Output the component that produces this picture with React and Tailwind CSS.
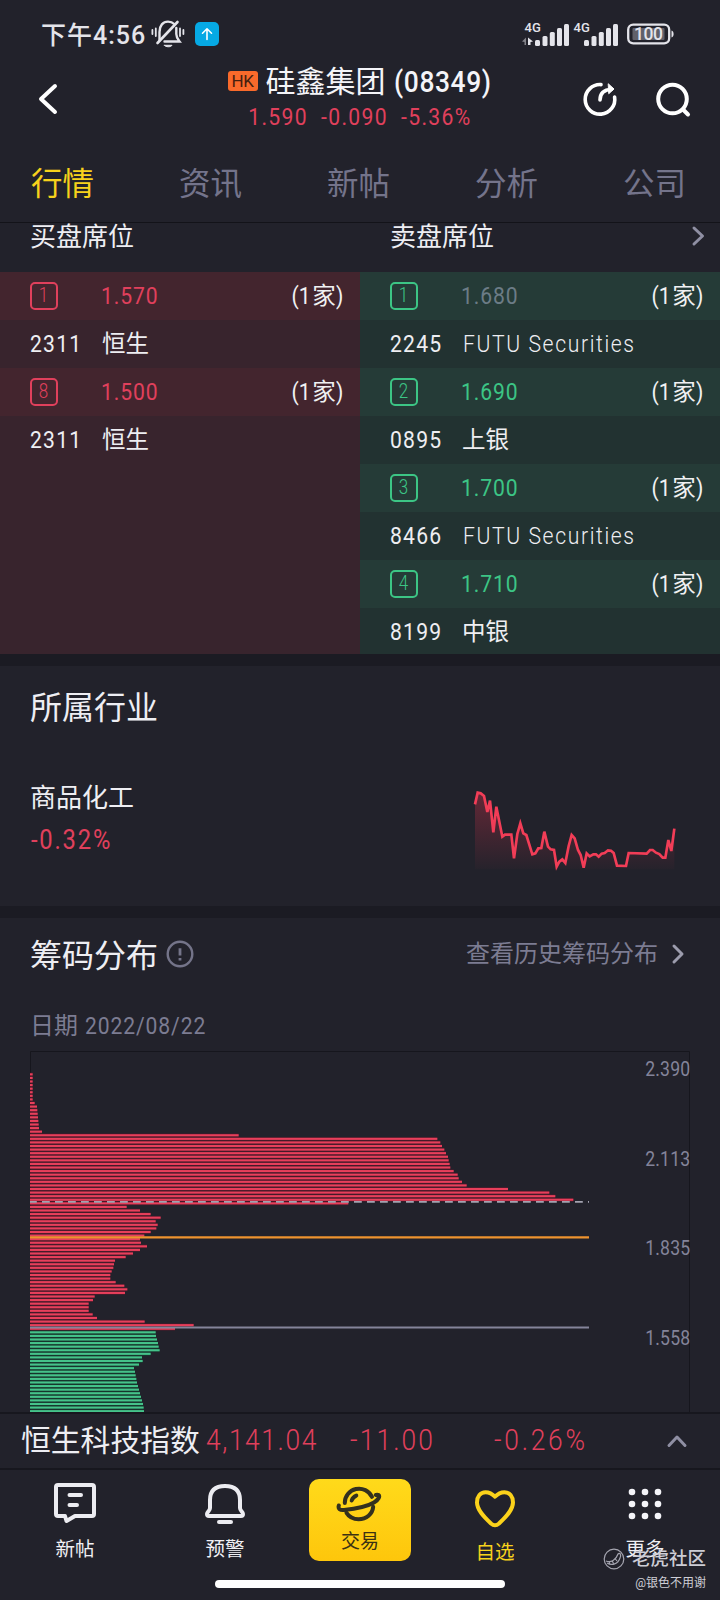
const RED = 'text-[#e0405c]';
const NARROW = 'inline-block whitespace-nowrap scale-x-[0.88] ';

const BAR_ENDS = [
  98, 98, 98, 98, 98, 98, 98, 98, 104, 111, 112, 113, 114, 115, 116, 117, 126, 716,
  1312, 1321, 1326, 1333, 1338, 1344, 1346, 1349, 1351, 1361, 1373, 1376, 1386, 1400, 1524, 1648, 1666, 1720, 1045,
  380, 420, 452, 482, 467, 473, 469, 452, 433, 420, 423, 441, 420, 399, 377, 345, 342, 340, 335, 331, 331, 347, 373, 382, 375,
  284, 279, 266, 266, 266, 278, 291, 434, 581, 525,
  467, 468, 471, 474, 476, 479, 452, 426, 428, 417, 402, 405, 407, 409, 411, 414, 417, 420, 423, 426, 429, 431, 432,
];
const FIRST_GREEN = 72;

const AXIS = [
  ['2.390', 1076],
  ['2.113', 1166],
  ['1.835', 1255],
  ['1.558', 1345],
];

function StatusBar() {
  return (
    <div className="flex h-[60px] shrink-0 items-center justify-between pt-[8px] pr-[46px] pl-[41px] text-[#e4e4ea]">
      <div className="flex items-center">
        <span className="w-[109px] pt-[3px] whitespace-nowrap text-[25px] leading-[30px] font-medium tracking-[1px]">下午4:56</span>
        <svg className="ml-[1px]" width="34" height="30" viewBox="0 0 34 30" fill="none" stroke="currentColor" strokeWidth="2.4" strokeLinecap="round">
          <path d="M8.5 21.5 V13 C8.5 6.5 12 2.6 17 2.6 C19.5 2.6 21.6 3.4 23.2 5" />
          <path d="M25.3 9 V15 C25.3 18 26.5 20 28.5 22.5 H13.5" />
          <path d="M26.5 3 L6.5 24" strokeWidth="2.6" />
          <path d="M13.5 26.3 H21 C20 28.3 14.5 28.3 13.5 26.3 Z" fill="currentColor" strokeWidth="1" />
          <path d="M1.4 11 V15 M4.8 9.5 V17 M29 9.5 V17 M32.4 11 V15" strokeWidth="1.8" />
        </svg>
        <div className="ml-[10px] flex size-6 items-center justify-center rounded-[5px] bg-[#06a9e4]">
          <svg width="14" height="14" viewBox="0 0 14 14" fill="none" stroke="white" strokeWidth="1.6" strokeLinecap="round" strokeLinejoin="round">
            <path d="M7 12.5 V2 M2.5 6.2 L7 1.8 L11.5 6.2" />
          </svg>
        </div>
      </div>
      <svg width="153" height="28" viewBox="521 20 153 28" fill="currentColor">
        <text x="524.5" y="31.5" fontSize="13" fontWeight="500">4G</text>
        <text x="573.5" y="31.5" fontSize="13" fontWeight="500">4G</text>
        <path d="M522 41.5 L526 37.5 V45 H524.5 V42 Z" opacity="0.5" />
        <path d="M528 37.5 L533 41.5 L530.5 42 V45 H528 Z" />
        {[0, 49].map((dx) => (
          <g key={dx}>
            <rect x={535 + dx} y="40" width="5" height="6" rx="1.5" />
            <rect x={542.5 + dx} y="36" width="5" height="10" rx="1.5" />
            <rect x={549.8 + dx} y="32" width="5" height="14" rx="1.5" />
            <rect x={557 + dx} y="28" width="5" height="18" rx="1.5" />
            <rect x={564 + dx} y="24" width="5" height="22" rx="1.5" />
          </g>
        ))}
        <rect x="628.2" y="24.7" width="41" height="18.6" rx="5" fill="none" stroke="currentColor" strokeWidth="2.3" />
        <rect x="632.5" y="28" width="32" height="12" rx="1" fill="#60606a" />
        <path d="M671.5 30.5 C674.3 31 674.3 37 671.5 37.5 Z" />
        <text x="634" y="40.3" fontSize="17.5" fontWeight="500" textLength="29">100</text>
      </svg>
    </div>
  );
}

function Header() {
  return (
    <div className="flex h-[88px] shrink-0 items-start justify-between pr-[28px] pl-[37px]">
      <svg className="mt-[22px]" width="22" height="34" viewBox="0 0 22 34" fill="none" stroke="white" strokeWidth="4" strokeLinecap="round" strokeLinejoin="round">
        <path d="M18 4 L4 17 L18 30" />
      </svg>
      <div className="ml-[79px] flex flex-col items-center pt-[3px]">
        <div className="flex h-[38px] items-center text-[30px] leading-[38px] text-[#f4f4f8]">
          <span className="mr-[8px] mb-[3px] flex h-5 w-[30px] items-center justify-center rounded-[3px] bg-[#f96a2b] text-[17px] leading-5 tracking-[-0.4px] text-[#45200f]">HK</span>
          <span className="whitespace-nowrap">硅鑫集团</span>
          <span className={NARROW + 'ml-[8px] w-[98px] origin-left font-medium tracking-[0.7px]'}>(08349)</span>
        </div>
        <div className={'flex h-8 origin-center scale-x-[0.88] items-center gap-[15px] whitespace-nowrap text-[24px] leading-8 tracking-[1.5px] ' + RED}>
          <span>1.590</span>
          <span>-0.090</span>
          <span>-5.36%</span>
        </div>
      </div>
      <div className="mt-[20px] flex items-center gap-[35px]">
        <svg width="38" height="38" viewBox="0 0 38 38" fill="none" stroke="white" strokeWidth="3.6" strokeLinecap="round">
          <path d="M20 4.6 A14.8 14.8 0 1 0 33.6 17" />
          <path d="M19 20 C19 13.5 22.5 9.7 30.5 9.2" />
          <path d="M27.5 4 L33 9 L28 13.5 Z" fill="white" strokeWidth="1" strokeLinejoin="round" />
        </svg>
        <svg width="38" height="38" viewBox="0 0 38 38" fill="none" stroke="white" strokeWidth="4" strokeLinecap="round">
          <circle cx="18.5" cy="19" r="14.3" />
          <path d="M29 29.5 L34 34.5" />
        </svg>
      </div>
    </div>
  );
}

function Tabs() {
  return (
    <div className="flex h-[75px] shrink-0 items-start justify-between border-b border-[#131319] pt-[19px] pr-[34px] pl-[31px] text-[31.5px] leading-[36px] text-[#74748b]">
      <span className="text-[#f7d21c]">行情</span>
      <span>资讯</span>
      <span>新帖</span>
      <span>分析</span>
      <span>公司</span>
    </div>
  );
}

function LevelRow({ level, price, tone, muted }) {
  const red = tone === 'red';
  return (
    <div className={'flex h-12 shrink-0 items-center pr-[16px] pl-[30px] text-[24px] leading-8 ' + (red ? 'bg-[#43252e]' : 'bg-[#253b37]')}>
      <span className={'flex size-7 items-center justify-center rounded-[5px] border-2 pb-[2px] text-[20px] leading-6 font-light ' + (red ? 'border-[#e0405c] text-[#e0405c]' : 'border-[#3cc585] text-[#3cc585]')}>
        <span className="scale-x-[0.85]">{level}</span>
      </span>
      <span className={NARROW + 'ml-[43px] origin-left tracking-[1px] ' + (muted ? 'text-[#6c7c86]' : red ? 'text-[#e0405c]' : 'text-[#3cc585]')}>{price}</span>
      <span className="ml-auto flex text-[#f0f0f2]">
        <span className={NARROW + 'origin-right'}>(1</span>
        <span className="ml-[1px] text-[23.5px]">家</span>
        <span className={NARROW + 'origin-left'}>)</span>
      </span>
    </div>
  );
}

function BrokerRow({ code, name, tone, latin }) {
  return (
    <div className={'flex h-12 shrink-0 items-center pl-[30px] text-[24px] leading-8 text-[#eeeef2] ' + (tone === 'red' ? 'bg-[#38242d]' : 'bg-[#223231]')}>
      <span className={NARROW + 'w-[72px] origin-left tracking-[1.4px]'}>{code}</span>
      <span className={latin ? NARROW + 'origin-left pl-[1px] font-light tracking-[1.85px]' : 'text-[23.5px] whitespace-nowrap'}>{name}</span>
    </div>
  );
}

function Seats() {
  return (
    <>
      <div className="grid h-[49px] shrink-0 grid-cols-2 text-[26px] leading-[28px] text-[#eeeef3]">
        <div className="pl-[30px]">买盘席位</div>
        <div className="flex items-start justify-between pr-[15px] pl-[30px]">
          <span>卖盘席位</span>
          <svg className="mt-[2px]" width="14" height="22" viewBox="0 0 14 22" fill="none" stroke="#8f8fa3" strokeWidth="3" strokeLinecap="round" strokeLinejoin="round">
            <path d="M3 3 L11.5 11 L3 19" />
          </svg>
        </div>
      </div>
      <div className="grid h-[382px] shrink-0 grid-cols-2 overflow-hidden">
        <div className="flex flex-col overflow-hidden bg-[#38242d]">
          <LevelRow tone="red" level="1" price="1.570" />
          <BrokerRow tone="red" code="2311" name="恒生" />
          <LevelRow tone="red" level="8" price="1.500" />
          <BrokerRow tone="red" code="2311" name="恒生" />
        </div>
        <div className="flex flex-col overflow-hidden">
          <LevelRow tone="green" level="1" price="1.680" muted />
          <BrokerRow tone="green" code="2245" name="FUTU Securities" latin />
          <LevelRow tone="green" level="2" price="1.690" />
          <BrokerRow tone="green" code="0895" name="上银" />
          <LevelRow tone="green" level="3" price="1.700" />
          <BrokerRow tone="green" code="8466" name="FUTU Securities" latin />
          <LevelRow tone="green" level="4" price="1.710" />
          <BrokerRow tone="green" code="8199" name="中银" />
        </div>
      </div>
    </>
  );
}

const SPARK = '105,133 113,98 122,100 132,108 142,156 150,122 160,217 169,140 187,230 195,224 214,224 222,295 232,222 241,190 250,220 259,225 277,283 286,280 295,265 304,264 313,215 324,260 332,268 342,270 350,320 358,305 367,298 376,309 386,258 395,225 404,235 414,270 422,285 431,323 440,280 449,289 460,283 468,283 476,290 485,281 494,279 504,271 513,272 521,279 531,317 558,318 566,279 620,281 630,270 638,270 648,278 658,282 668,293 676,293 685,240 694,273 703,206';

function Industry() {
  return (
    <div className="flex h-[240px] shrink-0 flex-col px-[30px] pt-[22px]">
      <h2 className="text-[32px] leading-[40px] text-[#eeeef3]">所属行业</h2>
      <div className="mt-[47px] flex justify-between">
        <div>
          <div className="pt-px text-[26px] leading-[44px] text-[#eeeef3]">商品化工</div>
          <div className={NARROW + 'origin-left pl-[1px] text-[27px] leading-[40px] tracking-[2.1px] ' + RED}>-0.32%</div>
        </div>
        <svg className="mr-[7px]" width="210" height="100" viewBox="99 45 630 300" fill="none">
          <defs>
            <linearGradient id="fade" x1="0" y1="98" x2="0" y2="328" gradientUnits="userSpaceOnUse">
              <stop offset="0" stopColor="#f0354f" stopOpacity="0.32" />
              <stop offset="1" stopColor="#f0354f" stopOpacity="0.02" />
            </linearGradient>
          </defs>
          <polygon points={'105,328 ' + SPARK + ' 703,328'} fill="url(#fade)" />
          <polyline points={SPARK} stroke="#f23d57" strokeWidth="8" strokeLinejoin="miter" />
        </svg>
      </div>
    </div>
  );
}

function Chips() {
  return (
    <div className="flex h-[494px] shrink-0 flex-col overflow-hidden">
      <div className="flex h-[72px] shrink-0 items-center justify-between pr-[35px] pl-[30px]">
        <div className="flex items-center">
          <h2 className="pt-[3px] text-[32px] leading-[40px] text-[#eeeef3]">筹码分布</h2>
          <svg className="ml-[8px]" width="28" height="28" viewBox="0 0 28 28" fill="none" stroke="#747489">
            <circle cx="14" cy="14" r="12.3" strokeWidth="2.4" />
            <path d="M14 8.3 V15.6 M14 18 V20.5" strokeWidth="2.8" />
          </svg>
        </div>
        <div className="flex items-center text-[24px] leading-8 text-[#7c7c92]">
          <span>查看历史筹码分布</span>
          <svg className="ml-[13px]" width="14" height="22" viewBox="0 0 14 22" fill="none" stroke="#9c9cad" strokeWidth="3" strokeLinecap="round" strokeLinejoin="round">
            <path d="M3 3 L11 11 L3 19" />
          </svg>
        </div>
      </div>
      <div className="flex h-[50px] shrink-0 items-center pt-[22px] pl-[30px] text-[24px] leading-7 whitespace-nowrap text-[#7c7c92]">
        <span>日期</span>
        <span className={NARROW + 'ml-[7px] origin-left tracking-[1px]'}>2022/08/22</span>
      </div>
      <svg className="shrink-0" width="720" height="372" viewBox="0 1040 720 372">
        <path d="M30.5 1412 V1051.5 H689.5 V1412" fill="none" stroke="#16161d" strokeWidth="1" />
        {BAR_ENDS.map((end, i) => {
          const y = 1074.4 + i * 3.583;
          const w = end / 3 - 30;
          const green = i >= FIRST_GREEN;
          return (
            <g key={i} fill={green ? '#45c38a' : '#e83f5b'}>
              <rect x="30" y={y - 1.8} width={w} height="3.583" fill={green ? '#0e4a32' : '#6a1529'} opacity="0.55" />
              <rect x="30" y={y - 1.1} width={w} height="2.1" />
            </g>
          );
        })}
        <path d="M30 1201.8 H589" stroke="#a3a3b0" strokeWidth="1.8" strokeDasharray="7.8 5.2" strokeDashoffset="1" />
        <path d="M30 1237.3 H589" stroke="#ee932f" strokeWidth="2.2" />
        <path d="M30 1327.6 H589" stroke="#84849a" strokeWidth="2" />
        {AXIS.map(([label, y]) => (
          <text key={label} transform={'translate(645.2 ' + y + ') scale(0.86 1)'} fill="#84849a" fontSize="20.5" letterSpacing="0.2">{label}</text>
        ))}
      </svg>
    </div>
  );
}

function Ticker() {
  return (
    <div className="flex h-[58px] shrink-0 items-center border-y-2 border-[#17171e] pr-[32px] pl-[21px] text-[30px] leading-10 whitespace-nowrap">
      <span className="w-[180px] text-[29.8px] text-[#eeeef3]">恒生科技指数</span>
      <span className={NARROW + 'mb-[2px] ml-[5px] w-[143px] origin-left font-light tracking-[1.8px] ' + RED}>4,141.04</span>
      <span className={NARROW + 'mb-[2px] ml-[1px] w-[144px] origin-left font-light tracking-[2.4px] ' + RED}>-11.00</span>
      <span className={NARROW + 'mb-[2px] origin-left font-light tracking-[3.1px] ' + RED}>-0.26%</span>
      <svg className="ml-auto" width="22" height="16" viewBox="0 0 22 16" fill="none" stroke="#8f8fa3" strokeWidth="3" strokeLinecap="round" strokeLinejoin="round">
        <path d="M3 12.5 L11 4 L19 12.5" />
      </svg>
    </div>
  );
}

function BottomNav() {
  return (
    <div className="relative flex h-[130px] shrink-0 flex-col">
      <div className="grid h-[110px] grid-cols-[150px_150px_120px_150px_150px] text-[19.5px] leading-6 text-[#f0f0f4]">
        <div className="flex flex-col items-center pt-[10px]">
          <svg width="46" height="46" viewBox="0 0 46 46" fill="none" stroke="#ececf1" strokeWidth="4" strokeLinecap="round" strokeLinejoin="round">
            <path d="M6 5 H40 Q42 5 42 7 V34 Q42 36 40 36 H23 L14.5 41 L13 36 H6 Q4 36 4 34 V7 Q4 5 6 5 Z" />
            <path d="M17.5 15 H29 M17.5 25 H25" />
          </svg>
          <span className="mt-[12px]">新帖</span>
        </div>
        <div className="flex flex-col items-center pt-[10px]">
          <svg width="46" height="46" viewBox="0 0 46 46" fill="none" stroke="#ececf1" strokeWidth="4" strokeLinecap="round" strokeLinejoin="round">
            <path d="M8 20 C8 11 13 6 23 6 C33 6 38 11 38 20 V28 C38 31 41 31.5 41 34 Q41 36 39 36 H7 Q5 36 5 34 C5 31.5 8 31 8 28 Z" />
            <path d="M17 42 H29" />
          </svg>
          <span className="mt-[12px]">预警</span>
        </div>
        <div className="flex justify-center pt-[9px]">
          <div className="flex h-[82px] w-[102px] flex-col items-center rounded-[10px] bg-gradient-to-b from-[#ffda1a] to-[#fec60b] pt-[4px] text-[19px] text-[#3b3213]">
            <svg width="48" height="42" viewBox="0 0 48 42" fill="none" stroke="#33301f" strokeWidth="4" strokeLinecap="round">
              <path d="M8.8 20 A14.3 14.3 0 0 1 36 13.8" />
              <path d="M15.7 17.5 C16.5 15 18 13.5 20.3 12.6" />
              <path d="M2.8 22.5 C1.8 26 4 27.4 8 27 C18 26 32 23 38 19.5 C43 16.5 44 13 42.5 12 C41.8 11.6 40.5 11.8 39.8 12" />
              <path d="M10.5 29.8 C13.5 34.5 17.5 36.2 22.5 36.2 C30.5 36.2 36.5 31 37.2 23.8" />
            </svg>
            <span className="mt-[5px]">交易</span>
          </div>
        </div>
        <div className="flex flex-col items-center pt-[18px] text-[#f7d21c]">
          <svg width="44" height="42" viewBox="0 0 44 42" fill="none" stroke="#fbd21b" strokeWidth="4" strokeLinejoin="round">
            <path d="M22 8.7 C19 5.5 15.5 4.2 12.5 4.2 C7.5 4.2 4 8.5 4 14.5 C4 22 11 29 18 35.5 Q22 39 26 35.5 C33 29 40 22 40 14.5 C40 8.5 36.5 4.2 31.5 4.2 C28.5 4.2 25 5.5 22 8.7 Z" />
          </svg>
          <span className="mt-[11px]">自选</span>
        </div>
        <div className="flex flex-col items-center pt-[16px]">
          <svg width="34" height="34" viewBox="0 0 34 34" fill="#f4f4f8">
            {[4, 17, 30].map((x) => [5, 17, 29].map((y) => <circle key={x + '-' + y} cx={x} cy={y + 1} r="3.3" />))}
          </svg>
          <span className="mt-[18px]">更多</span>
        </div>
      </div>
      <div className="mx-auto h-2 w-[290px] rounded-full bg-white" />
      <div className="absolute top-[77px] right-[14px] flex flex-col items-end whitespace-nowrap text-[#cdcdd5]">
        <div className="flex items-center">
          <svg className="mr-[7px]" width="22" height="22" viewBox="0 0 22 22" fill="none" stroke="#a5a5b0" strokeWidth="1.2">
            <circle cx="11" cy="11" r="9.8" />
            <path d="M3 13 C8 15 13 12 15 6 C17 4 18.5 7 17 10 C15 16 9 18 4 15 M6 13.5 L7 16.5 M9 12.5 L10.5 15.5 M12 10.5 L14 13" />
          </svg>
          <span className="text-[18.5px] leading-6 font-medium">老虎社区</span>
        </div>
        <span className="mt-[2px] text-[12px] leading-5">@银色不用谢</span>
      </div>
    </div>
  );
}

export default function App() {
  return (
    <div className="flex h-[1600px] w-[720px] flex-col overflow-hidden bg-[#22222b] font-['Roboto','Noto_Sans_CJK_SC',sans-serif]">
      <StatusBar />
      <Header />
      <Tabs />
      <Seats />
      <div className="h-3 shrink-0 bg-[#1b1b23]" />
      <Industry />
      <div className="h-3 shrink-0 bg-[#1b1b23]" />
      <Chips />
      <Ticker />
      <BottomNav />
    </div>
  );
}
